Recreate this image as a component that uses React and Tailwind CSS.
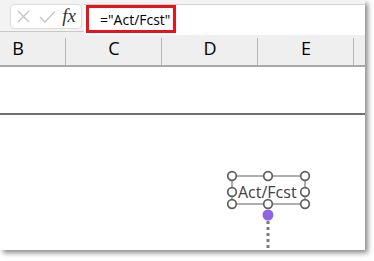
import React from 'react';

const cols = ['B', 'C', 'D', 'E'];

const Handle = ({ cx, cy }) => (
  <circle cx={cx} cy={cy} r="4.3" fill="white" stroke="#5f5f5f" strokeWidth="1.7" />
);

const TextShape = () => (
  <div className="absolute left-[222px] top-[166px] w-[96px] h-[86px]">
    <svg width="96" height="86" className="absolute inset-0">
      <line x1="10" y1="10" x2="83" y2="10" stroke="#5f5f5f" strokeWidth="1" />
      <line x1="10" y1="38" x2="83" y2="38" stroke="#5f5f5f" strokeWidth="1" />
      <line x1="10" y1="10" x2="10" y2="38" stroke="#5f5f5f" strokeWidth="1" />
      <line x1="83" y1="10" x2="83" y2="38" stroke="#5f5f5f" strokeWidth="1" />
      <line x1="46" y1="55" x2="46" y2="86" stroke="#7a7a7a" strokeWidth="3" strokeDasharray="3 3" />
      {[10, 46, 83].map((x) => (
        <React.Fragment key={x}>
          <Handle cx={x} cy={10} />
          <Handle cx={x} cy={38} />
        </React.Fragment>
      ))}
      <Handle cx={10} cy={26} />
      <Handle cx={83} cy={26} />
      <circle cx="46" cy="49" r="5.5" fill="#8f62e6" />
    </svg>
    <div className="absolute left-[16px] top-[15px] text-[16px] leading-[22px] text-[#404040] font-['Open_Sans',sans-serif]">
      Act/Fcst
    </div>
  </div>
);

export default function App() {
  return (
    <div className="w-[374px] h-[261px] bg-white relative overflow-hidden">
      <div className="w-[365px] h-[250px] bg-white flex flex-col shadow-[3px_3px_5px_rgba(0,0,0,0.45)] relative overflow-hidden">
        {/* formula bar */}
        <div className="h-[32px] flex bg-[#f3f3f3] border-b border-[#c8c8c8]">
          <div className="w-[84px] h-full flex items-center pl-[10px] pt-[2px]">
            <div className="w-[72px] h-[25px] bg-white border border-[#dcdcdc] rounded-[4px] flex items-center justify-between pl-[4px] pr-[5px]">
              <svg width="17" height="17" viewBox="0 0 17 17">
                <path d="M3 3 L14 14 M14 3 L3 14" stroke="#c4c4c4" strokeWidth="1.3" fill="none" />
              </svg>
              <svg width="19" height="17" viewBox="0 0 19 17">
                <path d="M2 9 L7 14 L17 3.5" stroke="#c4c4c4" strokeWidth="1.3" fill="none" />
              </svg>
              <span className="text-[19px] italic text-[#333] font-['Liberation_Serif',serif] leading-none -mt-[2px]">fx</span>
            </div>
          </div>
          <div className="flex-1 h-full bg-white border-t border-[#d0d0d0] mt-[4px] relative">
            <div className="absolute left-[2px] top-[0px] w-[90px] h-[28px] border-[3px] border-[#e8141b] flex items-center pl-[11px] text-[14px] text-black font-['Open_Sans',sans-serif]">
              ="Act/Fcst"
            </div>
          </div>
        </div>

        {/* column header */}
        <div className="h-[35px] flex bg-[#efefef] border-b-2 border-[#a8a8a8] -ml-[30px]">
          {cols.map((c) => (
            <div
              key={c}
              className="w-[96px] shrink-0 h-full flex items-end justify-center pb-[3px] relative text-[18px] text-black font-['Open_Sans',sans-serif]"
            >
              {c}
              <div className="absolute right-0 top-[6px] bottom-0 w-px bg-[#b4b4b4]" />
            </div>
          ))}
          <div className="flex-1" />
        </div>

        {/* rows */}
        <div className="h-[48px] border-b-2 border-[#6e6e6e]" />
        <div className="flex-1" />

        <TextShape />
      </div>
    </div>
  );
}
